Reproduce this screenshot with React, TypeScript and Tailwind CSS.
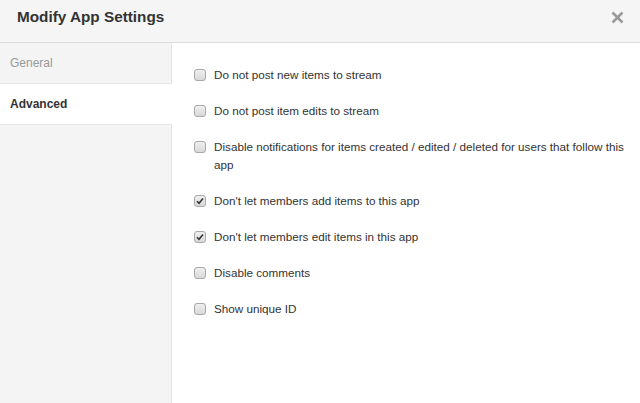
import type { ReactNode } from 'react'

interface Option {
  label: string
  checked: boolean
}

const OPTIONS: Option[] = [
  { label: 'Do not post new items to stream', checked: false },
  { label: 'Do not post item edits to stream', checked: false },
  {
    label:
      'Disable notifications for items created / edited / deleted for users that follow this app',
    checked: false,
  },
  { label: "Don't let members add items to this app", checked: true },
  { label: "Don't let members edit items in this app", checked: true },
  { label: 'Disable comments', checked: false },
  { label: 'Show unique ID', checked: false },
]

function Checkbox({ checked }: { checked: boolean }) {
  return (
    <span className="mt-[3px] flex h-[12px] w-[12px] shrink-0 items-center justify-center rounded-[3px] border border-[#a9a9a9] bg-gradient-to-b from-[#f0f0f0] to-[#d8d8d8]">
      {checked && (
        <svg width="8" height="8" viewBox="0 0 8 8">
          <path d="M1 4.2 L3 6.2 L7 1.5" fill="none" stroke="#333" strokeWidth="1.6" />
        </svg>
      )}
    </span>
  )
}

function Tab({ active, children }: { active?: boolean; children: ReactNode }) {
  return (
    <div
      className={`h-[41px] border-b border-[#e6e6e6] pl-[10px] text-[12px] leading-[40px] ${
        active ? 'mr-[-1px] bg-white font-bold text-[#333]' : 'text-[#999]'
      }`}
    >
      {children}
    </div>
  )
}

export default function App() {
  return (
    <div className="flex h-[403px] w-[640px] flex-col bg-white font-[family-name:'Liberation_Sans',Arial,sans-serif]">
      <div className="flex h-[43px] shrink-0 items-center justify-between border-b border-[#dcdcdc] bg-[#f5f5f5] pl-[17px] pr-[16px]">
        <h1 className="mt-[-8px] text-[15.3px] font-bold text-[#333]">Modify App Settings</h1>
        <button type="button" className="mt-[-8px] text-[#999]">
          <svg width="13" height="13" viewBox="0 0 13 13">
            <path d="M1.5 1.5 L11.5 11.5 M11.5 1.5 L1.5 11.5" stroke="#9a9a9a" strokeWidth="2.6" />
          </svg>
        </button>
      </div>
      <div className="flex min-h-0 flex-1">
        <div className="w-[172px] shrink-0 border-r border-[#e4e4e4] bg-[#f4f4f4]">
          <Tab>General</Tab>
          <Tab active>Advanced</Tab>
        </div>
        <div className="flex flex-1 flex-col gap-[18px] pl-[22px] pr-[8px] pt-[23px]">
          {OPTIONS.map((o) => (
            <label key={o.label} className="flex gap-[8px] text-[11.7px] leading-[18px] text-[#333]">
              <Checkbox checked={o.checked} />
              <span>{o.label}</span>
            </label>
          ))}
        </div>
      </div>
    </div>
  )
}
